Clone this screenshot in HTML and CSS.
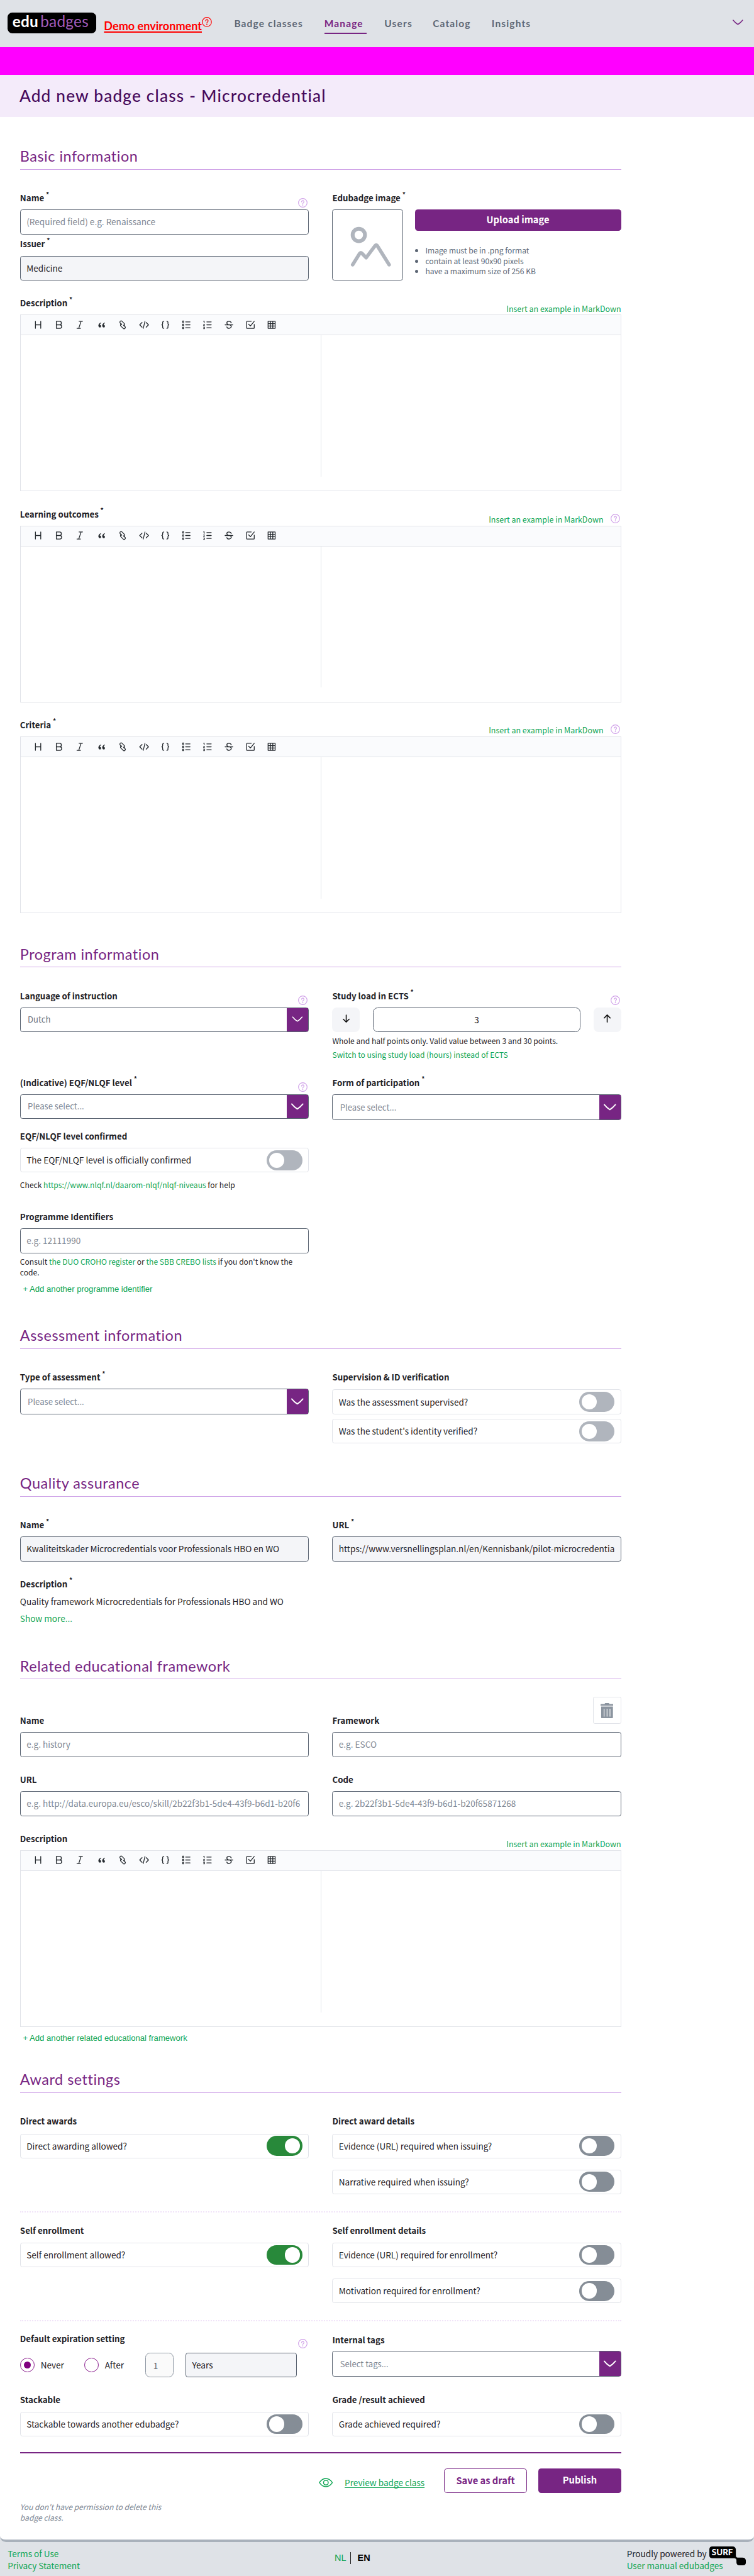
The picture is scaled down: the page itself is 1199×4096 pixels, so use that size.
FILE: index.html
```html
<!DOCTYPE html>
<html lang="en">
<head>
<meta charset="utf-8">
<title>Add new badge class - Microcredential</title>
<link rel="stylesheet" href="styles.css">
</head>
<body>
<svg class="sprite" aria-hidden="true">
  <symbol id="help" viewBox="0 0 16 16"><circle cx="8" cy="8" r="7.3" fill="none" stroke="currentColor" stroke-width="1.2"/><path d="M6 6.3a2 2 0 1 1 3 1.7Q8 8.6 8 9.7" fill="none" stroke="currentColor" stroke-width="1.3" stroke-linecap="round"/><circle cx="8" cy="11.8" r=".9" fill="currentColor"/></symbol>
  <symbol id="chevron" viewBox="0 0 22 12"><path d="M1.5 1.5Q6 7 11 10Q16 7 20.500 1.500" fill="none" stroke="currentColor" stroke-width="2" stroke-linecap="round" stroke-linejoin="round"/></symbol>
  <symbol id="tools" viewBox="0 0 412 16">
    <g fill="none" stroke="currentColor" stroke-width="1.4" stroke-linecap="round" stroke-linejoin="round">
      <path d="M3.500 2v12M12.500 2v12M3.500 8h9"/>
      <path d="M39 2h5.500a3 3 0 0 1 0 6H39zM39 8h6a3 3 0 0 1 0 6h-6z"/>
      <path d="M77.500 2h6M74 14h6M81 2l-4 12"/>
      <path d="M150.500 7.500l-2.500-2.500a2 2 0 0 1 3-3l4 4a2 2 0 0 1 0 3l-1 .5M153.500 8.500l2.500 2.500a2 2 0 0 1 0 3 2 2 0 0 1-3 0l-4-4a2 2 0 0 1 0-3l1-.5" transform="translate(-.5)"/>
      <path d="M184.500 4l-4 4 4 4M191.500 4l4 4-4 4M189.500 2l-3 12"/>
      <path d="M221.500 2q-2 0-2 2v2q0 2-1.500 2 1.500 0 1.500 2v2q0 2 2 2M226.500 2q2 0 2 2v2q0 2 1.500 2-1.500 0-1.500 2v2q0 2-2 2"/>
      <path d="M258.500 3h7.500M258.500 8h7.500M258.500 13h7.500M294.500 3h7.500M294.500 8h7.500M294.500 13h7.500"/>
      <path d="M253.500 1.500h1.500v2.500h-1.500zM253.500 6.800h1.500v2.500h-1.500zM253.500 12h1.500v2.500h-1.500z" stroke-width="1.200"/>
      <path d="M289 2l1-.5V4.500M289 7h1.500L289 9.500h1.500M289 12h1.500v2.500H289" stroke-width="1.200"/>
      <path d="M325.500 8h13M336 4.500Q335 2 332 2q-3.500 0-3.500 2.500T331 7.500M333 8q3 1 3 3t-3.500 3q-3.500 0-4-2.500"/>
      <path d="M370 2h-7q-1 0-1 1v10q0 1 1 1h11q1 0 1-1V7.500M365.500 7l3 3 6.500-8"/>
      <path d="M398.500 2h12v12h-12zM398.500 6h12M398.500 10h12M402.500 2v12M406.500 2v12"/>
    </g>
    <path d="M114.500 4q-5 2.500-4 6.500.6 2 2.500 2 2-.2 2-2.200-.1-2-2.300-2.200.2-1.800 2.300-3zM121 4q-5 2.500-4 6.500.6 2 2.500 2 2-.2 2-2.200-.1-2-2.300-2.200.2-1.800 2.300-3z" fill="currentColor"/>
  </symbol>
</svg>

<header class="topbar">
  <a class="brand"><span class="brand-edu">edu</span><span class="brand-badges">badges</span></a>
  <a class="demo">Demo environment</a><svg class="demo-help"><use href="#help"/></svg>
  <nav class="nav">
    <a class="n1">Badge classes</a><a class="n2 active">Manage</a><a class="n3">Users</a><a class="n4">Catalog</a><a class="n5">Insights</a>
  </nav>
  <svg class="user-menu"><use href="#chevron"/></svg>
</header>
<div class="env-strip"></div>
<div class="title-band"><h1>Add new badge class - Microcredential</h1></div>

<main class="page">
  <h2 class="first"><span>Basic information</span></h2>
  <div class="row basic">
    <div>
      <div class="label">Name<sup>*</sup><svg class="help"><use href="#help"/></svg></div>
      <div class="input ph">(Required field) e.g. Renaissance</div>
      <div class="label tight">Issuer<sup>*</sup></div>
      <div class="input off">Medicine</div>
    </div>
    <div>
      <div class="label">Edubadge image<sup>*</sup></div>
      <div class="upload">
        <div class="preview"><svg viewBox="0 0 70 70"><g fill="none" stroke="#b0b5bd" stroke-linecap="round" stroke-linejoin="round"><circle cx="14.500" cy="14.500" r="10.500" stroke-width="6.500"/><path d="M4 65L16 46Q18 43 20 46L27 53L42 33Q44 30 46 33L66 65" stroke-width="6"/></g></svg></div>
        <div class="upload-side">
          <div class="btn solid upload-btn">Upload image</div>
          <ul><li>Image must be in .png format</li><li>contain at least 90x90 pixels</li><li>have a maximum size of 256 KB</li></ul>
        </div>
      </div>
    </div>
  </div>
  <div class="md">
    <div class="label">Description<sup>*</sup><a class="example">Insert an example in MarkDown</a></div>
    <div class="editor"><div class="tools"><svg><use href="#tools"/></svg></div><div class="split"></div></div>
  </div>
  <div class="md">
    <div class="label">Learning outcomes<sup>*</sup><a class="example">Insert an example in MarkDown</a><svg class="help md-help"><use href="#help"/></svg></div>
    <div class="editor"><div class="tools"><svg><use href="#tools"/></svg></div><div class="split"></div></div>
  </div>
  <div class="md">
    <div class="label">Criteria<sup>*</sup><a class="example">Insert an example in MarkDown</a><svg class="help md-help"><use href="#help"/></svg></div>
    <div class="editor"><div class="tools"><svg><use href="#tools"/></svg></div><div class="split"></div></div>
  </div>

  <h2 class="program"><span>Program information</span></h2>
  <div class="row language">
    <div>
      <div class="label">Language of instruction<svg class="help"><use href="#help"/></svg></div>
      <div class="select dark"><span>Dutch</span><i><svg class="small"><use href="#chevron"/></svg></i></div>
    </div>
    <div>
      <div class="label">Study load in ECTS<sup>*</sup><svg class="help"><use href="#help"/></svg></div>
      <div class="stepper">
        <div class="step"><svg viewBox="0 0 14 14"><path d="M7 1v12M2 8l5 5 5-5"/></svg></div>
        <div class="count">3</div>
        <div class="step"><svg viewBox="0 0 14 14"><path d="M7 13V1M2 6l5-5 5 5"/></svg></div>
      </div>
      <div class="hint">Whole and half points only. Valid value between 3 and 30 points.</div>
      <div class="hint next"><a>Switch to using study load (hours) instead of ECTS</a></div>
    </div>
  </div>
  <div class="row level">
    <div>
      <div class="label">(Indicative) EQF/NLQF level<sup>*</sup><svg class="help"><use href="#help"/></svg></div>
      <div class="select"><span>Please select...</span><i><svg><use href="#chevron"/></svg></i></div>
      <div class="label confirmed">EQF/NLQF level confirmed</div>
      <div class="toggle">The EQF/NLQF level is officially confirmed<b class="switch light"></b></div>
      <div class="hint check">Check <a>https://www.nlqf.nl/daarom-nlqf/nlqf-niveaus</a> for help</div>
    </div>
    <div>
      <div class="label">Form of participation<sup>*</sup></div>
      <div class="select tall"><span>Please select...</span><i><svg><use href="#chevron"/></svg></i></div>
    </div>
  </div>
  <div class="row identifiers">
    <div>
      <div class="label">Programme Identifiers</div>
      <div class="input ph">e.g. 12111990</div>
      <div class="hint">Consult <a>the DUO CROHO register</a> or <a>the SBB CREBO lists</a> if you don't know the<br>code.</div>
      <a class="add">+ Add another programme identifier</a>
    </div>
  </div>

  <h2><span>Assessment information</span></h2>
  <div class="row assessment">
    <div>
      <div class="label">Type of assessment<sup>*</sup></div>
      <div class="select tall"><span>Please select...</span><i><svg><use href="#chevron"/></svg></i></div>
    </div>
    <div>
      <div class="label over-toggle">Supervision &amp; ID verification</div>
      <div class="toggle">Was the assessment supervised?<b class="switch light"></b></div>
      <div class="toggle near">Was the student's identity verified?<b class="switch light"></b></div>
    </div>
  </div>

  <h2><span>Quality assurance</span></h2>
  <div class="row fields">
    <div><div class="label">Name<sup>*</sup></div><div class="input off">Kwaliteitskader Microcredentials voor Professionals HBO en WO</div></div>
    <div><div class="label">URL<sup>*</sup></div><div class="input off">https://www.versnellingsplan.nl/en/Kennisbank/pilot-microcredentia</div></div>
  </div>
  <div class="quality-text">
    <div class="label">Description<sup>*</sup></div>
    <p>Quality framework Microcredentials for Professionals HBO and WO</p>
    <p><a>Show more...</a></p>
  </div>

  <h2 class="related"><span>Related educational framework</span></h2>
  <div class="trash-line"><div class="trash"><svg viewBox="0 0 22 26"><path fill="#8b949f" fill-rule="evenodd" d="M7 1.500Q7 0 8.500 0h5Q15 0 15 1.500h6q1 0 1 1V4.500H0V2.500q0-1 1-1zM1 6h20v18q0 2-2 2H3q-2 0-2-2zM5.400 9.500v13.500h1.200V9.500zM10.400 9.500v13.500h1.200V9.500zM15.400 9.500v13.500h1.200V9.500z"/></svg></div></div>
  <div class="row fields">
    <div><div class="label">Name</div><div class="input ph">e.g. history</div></div>
    <div><div class="label">Framework</div><div class="input ph">e.g. ESCO</div></div>
  </div>
  <div class="row fields">
    <div><div class="label">URL</div><div class="input ph">e.g. http://data.europa.eu/esco/skill/2b22f3b1-5de4-43f9-b6d1-b20f6</div></div>
    <div><div class="label">Code</div><div class="input ph">e.g. 2b22f3b1-5de4-43f9-b6d1-b20f65871268</div></div>
  </div>
  <div class="md last">
    <div class="label">Description<a class="example">Insert an example in MarkDown</a></div>
    <div class="editor"><div class="tools"><svg><use href="#tools"/></svg></div><div class="split"></div></div>
    <a class="add">+ Add another related educational framework</a>
  </div>

  <h2><span>Award settings</span></h2>
  <div class="row awards">
    <div><div class="label over-toggle">Direct awards</div><div class="toggle">Direct awarding allowed?<b class="switch on"></b></div></div>
    <div><div class="label over-toggle">Direct award details</div><div class="toggle">Evidence (URL) required when issuing?<b class="switch"></b></div><div class="toggle far">Narrative required when issuing?<b class="switch"></b></div></div>
  </div>
  <div class="row awards enroll">
    <div><div class="label over-toggle">Self enrollment</div><div class="toggle">Self enrollment allowed?<b class="switch on"></b></div></div>
    <div><div class="label over-toggle">Self enrollment details</div><div class="toggle">Evidence (URL) required for enrollment?<b class="switch"></b></div><div class="toggle far">Motivation required for enrollment?<b class="switch"></b></div></div>
  </div>
  <div class="row expiry">
    <div>
      <div class="label">Default expiration setting<svg class="help"><use href="#help"/></svg></div>
      <div class="expiry-line">
        <span class="radio checked"></span><span class="never">Never</span>
        <span class="radio"></span><span class="after">After</span>
        <div class="amount">1</div><div class="input off unit">Years</div>
      </div>
    </div>
    <div class="tags">
      <div class="label">Internal tags</div>
      <div class="select tall"><span>Select tags...</span><i><svg><use href="#chevron"/></svg></i></div>
    </div>
  </div>
  <div class="row stack">
    <div><div class="label over-toggle">Stackable</div><div class="toggle">Stackable towards another edubadge?<b class="switch"></b></div></div>
    <div><div class="label over-toggle">Grade /result achieved</div><div class="toggle">Grade achieved required?<b class="switch"></b></div></div>
  </div>

  <div class="actions">
    <svg class="eye" viewBox="0 0 24 16"><g fill="none" stroke="currentColor" stroke-width="1.500"><path d="M1 8Q5.500 1 12 1t11 7q-4.500 7-11 7T1 8z"/><circle cx="12" cy="8" r="4"/></g></svg>
    <a class="preview-link">Preview badge class</a>
    <div class="btn outline">Save as draft</div>
    <div class="btn solid">Publish</div>
  </div>
  <p class="note">You don't have permission to delete this<br>badge class.</p>
</main>

<footer class="footer">
  <div class="links"><a>Terms of Use</a><a>Privacy Statement</a></div>
  <div class="langs"><a>NL</a><span>EN</span></div>
  <div class="credits"><span>Proudly powered by</span><a>User manual edubadges</a></div>
  <svg class="surf" viewBox="0 0 62 32"><path d="M5 0h34q6 0 6 6v9q0 4 3 4h8q6 0 6 6v2q0 5-5 5h-6q-5 0-5-5v-3q0-4-4-4H5q-5 0-5-5V5q0-5 5-5z"/><text x="4" y="14.500" textLength="36" lengthAdjust="spacingAndGlyphs">SURF</text></svg>
</footer>
</body>
</html>
```
FILE: styles.css
```css
/* 1rem = 10 layout units */
html { font-size: 9.37px; }
* { box-sizing: border-box; }
body {
  margin: 0;
  background: #dfe2e7;
  font-family: "Noto Sans CJK SC", "Noto Sans", sans-serif;
  font-size: 1.45rem;
  line-height: 2rem;
  color: #1e2126;
}
a { color: #0ea554; }
p { margin: 0; }
.sprite { display: none; }
svg { display: block; flex: none; }

.topbar { display: flex; height: 8rem; padding-left: 1.3rem; background: #dfe2e7; font-family: Lato, sans-serif; }
.brand { width: 15rem; height: 3.5rem; margin-top: 2.15rem; padding-left: .8rem; border-radius: .8rem; background: #000; font-size: 2.6rem; line-height: 3.05rem; letter-spacing: .01em; white-space: nowrap; }
.brand-edu { color: #fff; font-weight: 700; margin-right: .35rem; }
.brand-badges { color: #a35cbb; }
.demo { width: 16.5rem; margin: 3.2rem 0 0 1.35rem; color: #f00; font-size: 1.93rem; font-weight: 700; line-height: 2.4rem; text-decoration: underline; text-decoration-thickness: 2px; text-underline-offset: .25rem; text-decoration-skip-ink: none; white-space: nowrap; }
.demo-help { width: 1.7rem; height: 1.7rem; margin: 2.9rem 0 0 .1rem; color: #f00; }
.nav { display: flex; margin: 2.8rem 0 0 3.8rem; color: #5d6775; }
.nav a { height: 3rem; color: inherit; font-size: 1.65rem; font-weight: 700; line-height: 2.4rem; letter-spacing: .075em; white-space: nowrap; }
.n1 { width: 12.2rem; margin-right: 3.1rem; }
.n2 { width: 7.2rem; margin-right: 3rem; }
.n3 { width: 5.2rem; margin-right: 3rem; }
.n4 { width: 7rem; margin-right: 3rem; }
.n5 { width: 6.4rem; }
.nav .active { color: #772583; border-bottom: .3rem solid #772583; }
.user-menu { width: 2rem; height: 1rem; margin: 3.3rem 1.7rem 0 auto; color: #772583; }
.env-strip { height: 4.7rem; background: #f0f; }
.title-band { height: 7.2rem; padding: 1.95rem 0 0 3.3rem; background: #f4ebfa; }
h1 { margin: 0; font: 500 2.8rem/3.4rem Lato, sans-serif; color: #470a5c; letter-spacing: .045em; white-space: nowrap; }

.page { height: 411.5rem; padding: .1rem 3.4rem 0; background: #fff; border-bottom: .5rem solid #a9b1bb; border-radius: 0 0 1rem 1rem; }
.page > * { width: 102rem; }
h2 { height: 4rem; margin: 0 0 3.9rem; border-bottom: 1px solid #d0a5e8; font: 400 2.5rem/3.5rem Lato, sans-serif; color: #772583; letter-spacing: .022em; }
h2.first { margin-top: 4.8rem; }
h2.program { margin-top: 5.2rem; }
h2.related { margin-bottom: 3rem; }

.row { display: grid; grid-template-columns: 49rem 49rem; column-gap: 4rem; align-items: start; }
.basic { height: 17.8rem; }
.language { height: 14.7rem; }
.level { height: 22.8rem; }
.identifiers { height: 19.3rem; }
.assessment { height: 17.2rem; }
.fields { height: 10rem; }
.quality-text { height: 13.1rem; }
.quality-text p { margin-top: .9rem; }
.quality-text .label { margin-bottom: 0; }

.label { display: flex; height: 2rem; margin-bottom: .9rem; font-size: 1.42rem; font-weight: 700; white-space: nowrap; }
.label sup { margin: -.7rem 0 0 .3rem; font-size: 1.1rem; line-height: 2rem; }
.label.tight { margin-top: .7rem; }
.label.confirmed { margin-top: 2rem; }
.label.over-toggle { margin-bottom: 1rem; }
.help { width: 1.6rem; height: 1.6rem; margin: .9rem .2rem 0 auto; color: #cf9fe8; }
.example { margin: .9rem 0 0 auto; font-size: 1.33rem; font-weight: 400; }
.md-help { margin-left: 1.2rem; }

.input, .toggle, .select { height: 4.2rem; border: 1px solid #5a6472; border-radius: .4rem; line-height: 3.9rem; white-space: nowrap; }
.input { padding: 0 1rem; }
.ph { color: #808894; }
.off { background: #f4f5f8; }
.select { display: flex; color: #808894; font-size: 1.4rem; }
.select span { flex: 1; padding-left: 1.2rem; }
.select i { display: flex; width: 3.6rem; align-items: center; justify-content: center; background: #772583; color: #fff; }
.select svg { width: 2.3rem; height: 1.2rem; }
.select svg.small { width: 1.9rem; height: 1rem; margin-top: -.3rem; }
.select.tall { height: 4.4rem; line-height: 4.2rem; }
.select.dark { color: #6c7480; }
.toggle { display: flex; align-items: center; justify-content: space-between; padding: 0 1rem; border-color: #e1e3e9; }
.toggle.near { margin-top: .8rem; }
.toggle.far { margin-top: 1.9rem; }
.switch { position: relative; width: 6rem; height: 3.4rem; border-radius: 1.7rem; background: #858d96; }
.switch::after { content: ""; position: absolute; left: .4rem; top: .4rem; width: 2.6rem; height: 2.6rem; border-radius: 50%; background: #fff; }
.switch.light { background: #b0b5bd; }
.switch.on { background: #28893a; }
.switch.on::after { left: 3rem; }

.upload { display: flex; gap: 2rem; }
.preview { width: 12rem; height: 12rem; padding: 2.7rem 0 0 2.9rem; border: 1px solid #5a6472; border-radius: .4rem; }
.preview svg { width: 7rem; height: 7rem; }
.upload-side { flex: 1; }
.btn { height: 4.2rem; border-radius: .5rem; font-size: 1.57rem; font-weight: 700; line-height: 3.8rem; text-align: center; white-space: nowrap; }
.solid { background: #772583; color: #fff; }
.outline { border: 1px solid #772583; color: #772583; }
.upload-btn { height: 3.6rem; line-height: 3.4rem; }
ul { margin: 2.4rem 0 0; padding-left: 1.8rem; font-size: 1.29rem; line-height: 1.8rem; color: #5d6775; }

.md { margin-bottom: 2.9rem; }
.md.last { height: 40.1rem; margin: 0; }
.editor { height: 30rem; border: 1px solid #e1e3e9; }
.tools { height: 3.4rem; padding: .8rem 0 0 2.2rem; border-bottom: 1px solid #e1e3e9; background: #fafbfd; }
.tools svg { width: 41.2rem; height: 1.6rem; color: #24292e; }
.split { width: 51rem; height: 24rem; border-right: 1px solid #e1e3e9; }

.stepper { display: flex; justify-content: space-between; height: 4.2rem; margin-bottom: .6rem; text-align: center; }
.step { display: flex; width: 4.7rem; padding-bottom: .5rem; align-items: center; justify-content: center; border-radius: .8rem; background: #f4f5f8; }
.step svg { width: 1.4rem; height: 1.4rem; fill: none; stroke: #111; stroke-width: 1.7; stroke-linecap: round; stroke-linejoin: round; }
.count { width: 35.3rem; border: 1px solid #5a6472; border-radius: .8rem; line-height: 4rem; }
.hint { font-size: 1.29rem; line-height: 1.8rem; white-space: nowrap; }
.input + .hint { margin-top: .6rem; }
.hint.next { margin-top: .5rem; }
.hint.check { margin-top: 1.2rem; }
.add { display: block; margin: 1rem 0 0 .5rem; font-family: "Liberation Sans", Arial, sans-serif; font-size: 1.4rem; line-height: 2rem; }
.md .add { margin-top: 1rem; }

.trash-line { display: flex; justify-content: flex-end; height: 3.1rem; }
.trash { width: 4.8rem; height: 4.6rem; padding: .9rem 0 0 1.2rem; border: 1px solid #e1e3e9; border-radius: .3rem; }
.trash svg { width: 2.2rem; height: 2.6rem; }

.awards { height: 16.4rem; border-bottom: 2px dotted #f0e3f8; }
.awards.enroll { height: 18.5rem; padding-top: 2.1rem; }
.expiry { height: 12.3rem; padding-top: 2rem; }
.expiry .label { margin-bottom: 1.3rem; }
.tags { padding-top: .2rem; }
.tags .label { margin-bottom: .8rem; }
.expiry-line { display: flex; align-items: center; }
.radio { display: flex; width: 2.5rem; height: 2.5rem; align-items: center; justify-content: center; border: 1px solid #8a1c8e; border-radius: 50%; }
.checked::after { content: ""; width: 1.2rem; height: 1.2rem; border-radius: 50%; background: #800080; }
.never { width: 8.4rem; padding-left: 1rem; }
.after { width: 7.9rem; padding-left: 1rem; }
.amount { width: 4.8rem; height: 4.2rem; padding-left: 1.2rem; border: 1px solid #8f98a3; border-radius: .8rem; background: #fafafa; color: #62666c; line-height: 4.2rem; }
.unit { width: 18.9rem; margin-left: 2rem; }

.stack { height: 0; }
.actions { display: flex; margin-top: 9.9rem; padding-top: 2.5rem; border-top: 2px solid #772583; }
.eye { width: 2.4rem; height: 1.6rem; margin: 1.6rem 2rem 0 50.7rem; color: #0ea554; }
.preview-link { width: 13.4rem; margin: 1.4rem 3.5rem 0 0; text-decoration: underline; text-underline-offset: .2rem; text-decoration-skip-ink: none; white-space: nowrap; }
.actions .btn { width: 14rem; margin-right: 2rem; }
.actions .btn.solid { margin-right: 0; }
.note { margin-top: 1.45rem; font-size: 1.29rem; font-style: italic; line-height: 1.8rem; color: #808894; }

.footer { display: flex; height: 5.7rem; padding: .95rem 1.4rem 0 1.3rem; background: #dfe2e7; }
.links, .credits { display: flex; flex-direction: column; white-space: nowrap; }
.links { width: 55.5rem; }
.langs { display: flex; width: 49.6rem; height: 2rem; margin-top: .75rem; font: 1.55rem/2.1rem "Liberation Sans", Arial, sans-serif; }
.langs a { width: 2.8rem; border-right: 1px solid #222; }
.langs span { padding-left: 1.1rem; color: #000; font-weight: 700; }
.credits { width: 14rem; }
.surf { width: 6.2rem; height: 3.2rem; margin-top: -.25rem; }
.surf text { fill: #fff; font: 900 14px Lato, sans-serif; }
```
